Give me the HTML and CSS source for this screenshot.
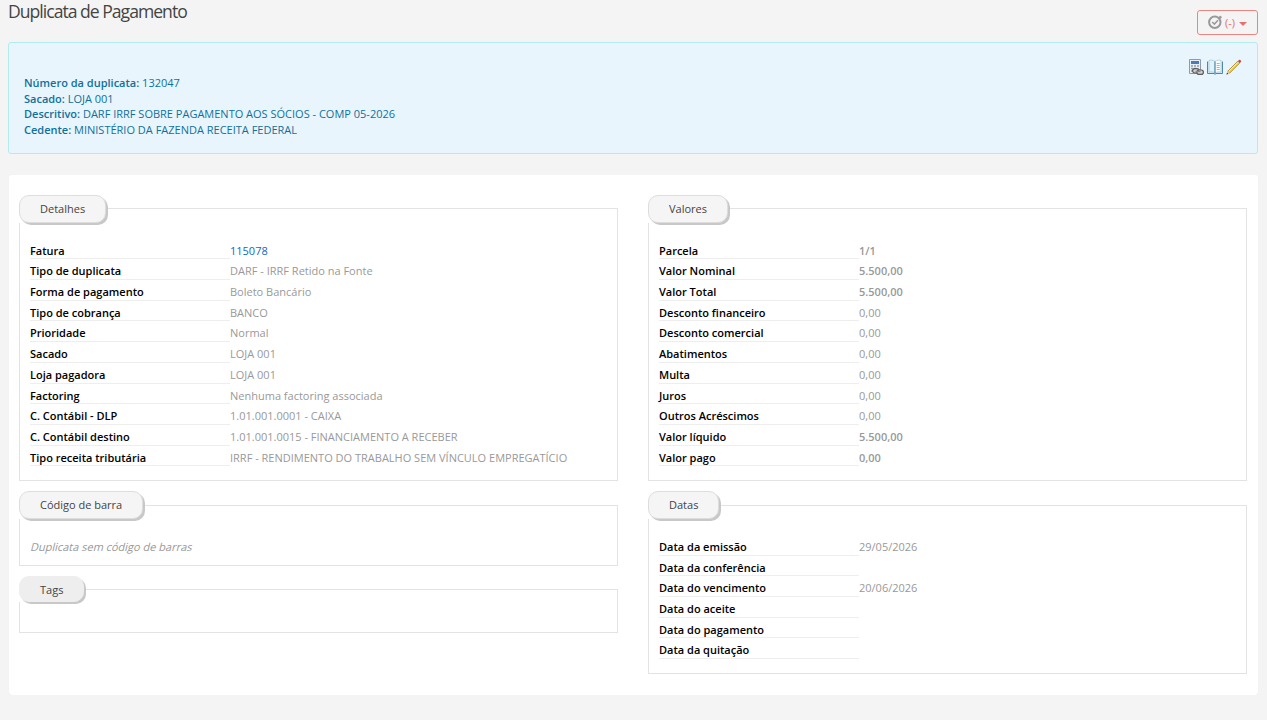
FILE: index.html
```
<!DOCTYPE html>
<html lang="pt-BR">
  <head>
    <meta charset="UTF-8" />
    <meta name="viewport" content="width=device-width, initial-scale=1.0" />
    <link rel="stylesheet" href="styles.css">
    <title>Duplicata de Pagamento</title>
  </head>
  <body>
    <div class="header">
      <h1>Duplicata de Pagamento</h1>
      <button class="btn-status" type="button">
        <svg width="15" height="14" viewBox="0 0 15 14" fill="none" stroke="#999">
          <circle cx="6.800" cy="7.200" r="5.700" stroke-width="2" />
          <path d="M4.200 7l2.200 2.100L10 5.300" stroke-width="1.500" />
          <circle cx="12.300" cy="2.300" r="1" fill="#999" />
        </svg>
        <span>(-)</span>
        <i class="caret"></i>
      </button>
    </div>

    <div class="alert">
      <div class="info">
        <div><b>Número da duplicata:</b> 132047</div>
        <div><b>Sacado:</b> LOJA 001</div>
        <div><b>Descritivo:</b> DARF IRRF SOBRE PAGAMENTO AOS SÓCIOS - COMP 05-2026</div>
        <div><b>Cedente:</b> MINISTÉRIO DA FAZENDA RECEITA FEDERAL</div>
      </div>
      <div class="tools">
        <svg width="16" height="16" viewBox="0 0 16 16">
          <path d="M1.500.500h11v14h-11z" fill="#e9eef4" stroke="#8f9aa8" />
          <path d="M3 2h8v3H3z" fill="#4a7bb8" />
          <path d="M3 7h2M6 7h2M9 7h2M3 9.500h2M6 9.500h2M3 12h2" stroke="#8f9eb0" stroke-width="1.300" />
          <rect x="4.600" y="9.600" width="6.500" height="4.400" rx="2.200" fill="#d0d0d0" stroke="#5a5a5a" stroke-width="1.200" />
          <rect x="8.900" y="11" width="6.500" height="4.400" rx="2.200" fill="#d0d0d0" stroke="#5a5a5a" stroke-width="1.200" />
          <path d="M7.500 12.500h5" stroke="#888" stroke-width="1.200" />
        </svg>
        <svg width="18" height="16" viewBox="0 0 18 16">
          <path d="M1.500 2.500v12H8l1 .8 1-.8h6.500v-12" fill="#d8edf7" stroke="#4a88ac" />
          <path d="M3 1.500c2-.7 4.200-.5 6 1v11.300c-1.800-1-4-1.200-6-.6z" fill="#e1f3fb" stroke="#9cc3d8" stroke-width=".7" />
          <path d="M9 2.500c1.800-1.500 4-1.700 6-1v11.700c-2-.6-4.200-.4-6 .6z" fill="#fff" stroke="#9cc3d8" stroke-width=".7" />
          <path d="M9 2.500v12" stroke="#3f7898" stroke-width=".9" />
          <path d="M10.700 4.500h3M10.700 6.500h3M10.700 8.500h3M10.700 10.500h3" stroke="#8ab3cb" stroke-width=".9" />
        </svg>
        <svg width="16" height="16" viewBox="0 0 16 16">
          <path d="M1.700 12.300L12 2l1.900 1.900L3.600 14.200z" fill="#f1d24f" stroke="#8f7124" stroke-width=".7" />
          <path d="M2.800 12.200L12.300 2.700" stroke="#fff0a0" stroke-width=".9" />
          <path d="M.6 15.400l1.100-3.100 1.900 1.900z" fill="#e6cd9b" />
          <path d="M.4 15.600l.7-2 1.300 1.300z" fill="#333" />
          <path d="M12 2l1-1c.9-.8 2.800 1.100 1.900 2l-1 .9z" fill="#cf443c" />
          <path d="M11.300 2.700l1.900 1.900" stroke="#c6c6c6" />
        </svg>
      </div>
    </div>

    <div class="card">
      <div class="col">
        <fieldset>
          <legend>Detalhes</legend>
          <dl>
            <dt>Fatura</dt><dd><a href="#">115078</a></dd>
            <dt>Tipo de duplicata</dt><dd>DARF - IRRF Retido na Fonte</dd>
            <dt>Forma de pagamento</dt><dd>Boleto Bancário</dd>
            <dt>Tipo de cobrança</dt><dd>BANCO</dd>
            <dt>Prioridade</dt><dd>Normal</dd>
            <dt>Sacado</dt><dd>LOJA 001</dd>
            <dt>Loja pagadora</dt><dd>LOJA 001</dd>
            <dt>Factoring</dt><dd>Nenhuma factoring associada</dd>
            <dt>C. Contábil - DLP</dt><dd>1.01.001.0001 - CAIXA</dd>
            <dt>C. Contábil destino</dt><dd>1.01.001.0015 - FINANCIAMENTO A RECEBER</dd>
            <dt>Tipo receita tributária</dt><dd>IRRF - RENDIMENTO DO TRABALHO SEM VÍNCULO EMPREGATÍCIO</dd>
          </dl>
        </fieldset>
        <fieldset class="barcode">
          <legend>Código de barra</legend>
          <p class="empty">Duplicata sem código de barras</p>
        </fieldset>
        <fieldset class="tags">
          <legend>Tags</legend>
        </fieldset>
      </div>

      <div class="col">
        <fieldset>
          <legend>Valores</legend>
          <dl>
            <dt>Parcela</dt><dd><b>1/1</b></dd>
            <dt>Valor Nominal</dt><dd><b>5.500,00</b></dd>
            <dt>Valor Total</dt><dd><b>5.500,00</b></dd>
            <dt>Desconto financeiro</dt><dd>0,00</dd>
            <dt>Desconto comercial</dt><dd>0,00</dd>
            <dt>Abatimentos</dt><dd>0,00</dd>
            <dt>Multa</dt><dd>0,00</dd>
            <dt>Juros</dt><dd>0,00</dd>
            <dt>Outros Acréscimos</dt><dd>0,00</dd>
            <dt>Valor líquido</dt><dd><b>5.500,00</b></dd>
            <dt>Valor pago</dt><dd><b>0,00</b></dd>
          </dl>
        </fieldset>
        <fieldset>
          <legend>Datas</legend>
          <dl>
            <dt>Data da emissão</dt><dd>29/05/2026</dd>
            <dt>Data da conferência</dt><dd></dd>
            <dt>Data do vencimento</dt><dd>20/06/2026</dd>
            <dt>Data do aceite</dt><dd></dd>
            <dt>Data do pagamento</dt><dd></dd>
            <dt>Data da quitação</dt><dd></dd>
          </dl>
        </fieldset>
      </div>
    </div>
  </body>
</html>
```
FILE: styles.css
```
* {
  box-sizing: border-box;
}

body {
  margin: 0;
  padding: 0 9px 0 8px;
  background: #f4f4f4;
  color: #999;
  font-family: "Open Sans", sans-serif;
  font-size: 11px;
  line-height: 1.42857;
}

b {
  font-weight: 600;
}

.header {
  display: flex;
  justify-content: space-between;
  height: 42px;
}

h1 {
  margin: 0;
  color: #444;
  font-size: 17.6px;
  font-weight: 400;
  line-height: 23px;
  letter-spacing: -1px;
}

.btn-status {
  display: flex;
  align-items: center;
  gap: 2px;
  width: 61px;
  height: 25px;
  margin-top: 10px;
  padding: 0 0 1px 10px;
  background: transparent;
  border: 1px solid #ee8480;
  border-radius: 3px;
  color: #e7706c;
  font-family: inherit;
  font-size: 11px;
}

.caret {
  border: 4px solid transparent;
  border-top-color: #e7706c;
  border-bottom: 0;
  margin: 3px 0 0 2px;
}

.alert {
  display: flex;
  justify-content: space-between;
  width: 1250px;
  height: 112px;
  padding: 16px 15px 0;
  background: #e8f5fc;
  border: 1px solid #b0ecf1;
  border-radius: 3px;
  color: #10709c;
}

.info {
  padding-top: 16px;
}

.tools {
  display: flex;
  gap: 2px;
}

.card {
  display: flex;
  gap: 30px;
  width: 1249px;
  height: 520px;
  margin: 21px 0 0 1px;
  padding: 20px 11px 0 10px;
  background: #fff;
  border-radius: 3px;
  box-shadow: 0 1px 1px #e6e6f2;
}

.col {
  flex: 1;
}

fieldset {
  min-width: 0;
  margin: 0 0 10px;
  padding: 19.9px 10px 10.05px;
  border: 1px solid #e3e3e3;
}

legend {
  margin-left: -11px;
  padding: 5px 20px;
  background: #f5f5f5;
  border: 1px solid #ddd;
  border-radius: 10px;
  box-shadow: 2px 2px 0 #c8c8c8;
  color: #444;
}

dl {
  display: grid;
  grid-template-columns: 200px 1fr;
  row-gap: 4px;
  margin: 0 0 4px;
}

dt {
  border-bottom: 1px solid #eee;
  color: #000;
  font-weight: 600;
}

dd {
  margin: 0;
}

a {
  color: #1268bd;
  text-decoration: none;
}

.barcode {
  padding-bottom: 10.3px;
}

/* slant the regular face, the italic one is narrower */
.empty {
  margin: 0 0 0 1px;
  transform: skewX(-14deg);
}

.tags {
  height: 57px;
}

.tags legend {
  height: 26.4px;
  background: #eee;
  border-color: #eee;
}
```
